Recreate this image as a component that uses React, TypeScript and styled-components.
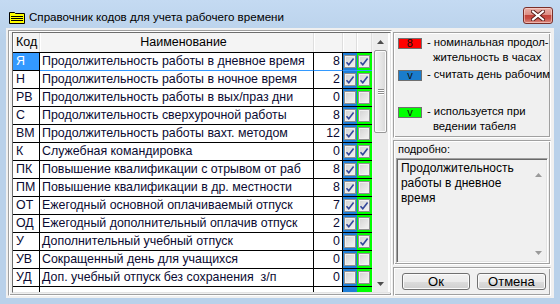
import React from "react";
import styled, { createGlobalStyle } from "styled-components";

const GlobalStyle = createGlobalStyle`
  html, body { margin: 0; padding: 0; }
  body { background: #b9d1ea; font-family: "Liberation Sans", Arial, sans-serif; }
  * { box-sizing: border-box; }
`;

type Row = { code: string; name: string; hours: number; work: boolean; used: boolean };

const rows: Row[] = [
  { code: "Я", name: "Продолжительность работы в дневное время", hours: 8, work: true, used: true },
  { code: "Н", name: "Продолжительность работы в ночное время", hours: 2, work: true, used: true },
  { code: "РВ", name: "Продолжительность работы в вых/праз дни", hours: 0, work: false, used: false },
  { code: "С", name: "Продолжительность сверхурочной работы", hours: 8, work: true, used: false },
  { code: "ВМ", name: "Продолжительность работы вахт. методом", hours: 12, work: true, used: false },
  { code: "К", name: "Служебная командировка", hours: 0, work: true, used: true },
  { code: "ПК", name: "Повышение квалификации с отрывом от раб", hours: 8, work: true, used: false },
  { code: "ПМ", name: "Повышение квалификации в др. местности", hours: 8, work: true, used: false },
  { code: "ОТ", name: "Ежегодный основной оплачиваемый отпуск", hours: 7, work: true, used: true },
  { code: "ОД", name: "Ежегодный дополнительный оплачив отпуск", hours: 2, work: true, used: false },
  { code: "У", name: "Дополнительный учебный отпуск", hours: 0, work: false, used: true },
  { code: "УВ", name: "Сокращенный день для учащихся", hours: 0, work: false, used: false },
  { code: "УД", name: "Доп. учебный отпуск без сохранения\u00a0 з/п", hours: 0, work: false, used: false },
];

const COLS = "27px 274px 29px 14px 15px";

const Window = styled.div`
  width: 560px;
  height: 304px;
  background: linear-gradient(#c4daf2, #b9d1ea 40px, #b9d1ea);
  display: flex;
  flex-direction: column;
  overflow: hidden;
`;

const TitleBar = styled.div`
  height: 28px;
  flex-shrink: 0;
  display: flex;
  align-items: flex-start;
  padding: 0 7px 0 9px;
`;

const AppIcon = styled.svg`
  margin-top: 12px;
  flex-shrink: 0;
`;

const Title = styled.div`
  margin-left: 4px;
  margin-top: 9px;
  font-family: "Liberation Sans", Arial, sans-serif;
  font-size: 11.6px;
  line-height: 16px;
  color: #000;
  flex: 1;
  white-space: nowrap;
`;

const CloseBtn = styled.div`
  margin-top: 7px;
  width: 30px;
  height: 17px;
  border: 1px solid #7a2f29;
  border-radius: 3px;
  background: linear-gradient(#eab1a9 0%, #dc8d83 45%, #c4443a 50%, #c94f45 70%, #d98c82 100%);
  box-shadow: inset 0 0 0 1px rgba(255, 220, 215, 0.55);
  display: flex;
  align-items: center;
  justify-content: center;
`;

const Client = styled.div`
  flex: 1;
  margin: 0 6px 6px 6px;
  background: #f0f0f0;
  display: flex;
  gap: 1px;
  padding: 2px 3px 2px 2px;
  min-height: 0;
`;

const Panel = styled.div`
  border: 1px solid;
  border-color: #a0a0a0 #ffffff #ffffff #a0a0a0;
  box-shadow: inset 1px 1px #ffffff, inset -1px -1px #a0a0a0;
`;

const LeftPanel = styled(Panel)`
  width: 384px;
  display: flex;
  padding: 1px 0 2px 3px;
`;

const GridBox = styled.div`
  flex: 1;
  display: flex;
  border: 1px solid;
  border-color: #6d6d6d #e3e3e3 #e3e3e3 #6d6d6d;
  background: #fff;
  min-height: 0;
`;

const Table = styled.div`
  width: 359px;
  display: flex;
  flex-direction: column;
  overflow: hidden;
`;

const HeaderRow = styled.div`
  display: grid;
  grid-template-columns: ${COLS};
  height: 20px;
  flex-shrink: 0;
  background: #f4f4f4;
  border-bottom: 1px solid #000;
`;

const HeadCell = styled.div<{ $center?: boolean }>`
  border-right: 1px solid #dedede;
  box-shadow: inset 1px 0 #ffffff;
  font-size: 12.5px;
  line-height: 19px;
  color: #000;
  padding-left: ${(p) => (p.$center ? "14px" : "3px")};
  text-align: ${(p) => (p.$center ? "center" : "left")};
  white-space: nowrap;
`;

const DataRow = styled.div`
  display: grid;
  grid-template-columns: ${COLS};
  height: 18px;
  flex-shrink: 0;
`;

const Cell = styled.div<{ $selected?: boolean; $focusLine?: boolean; $right?: boolean }>`
  border-right: 1px solid #000;
  border-bottom: 1px solid ${(p) => (p.$focusLine ? "#3399ff" : "#000")};
  background: ${(p) => (p.$selected ? "#3399ff" : "transparent")};
  color: ${(p) => (p.$selected ? "#ffffff" : "#0a0a32")};
  font-size: 12.4px;
  line-height: 17px;
  padding: ${(p) => (p.$right ? "0 2px 0 0" : "0 0 0 2px")};
  text-align: ${(p) => (p.$right ? "right" : "left")};
  white-space: nowrap;
  overflow: hidden;
`;

const CodeCell = styled(Cell)`
  padding-left: 3px;
`;

const FlagCell = styled.div<{ $color: string; $focusLine?: boolean }>`
  background: ${(p) => p.$color};
  border-bottom: 1px solid ${(p) => (p.$focusLine ? "#3399ff" : "#000")};
  display: flex;
  align-items: center;
  padding-left: 1px;
`;

const CheckBox = styled.div`
  width: 12px;
  height: 13px;
  border: 1px solid #8e8f8f;
  background: linear-gradient(135deg, #d2d2d2, #f4f4f4);
  box-shadow: inset 0 0 0 1px #f0f0f0;
  display: flex;
  align-items: center;
  justify-content: center;
`;

const VScroll = styled.div`
  width: 16px;
  display: flex;
  flex-direction: column;
  background: #ececec;
  border-left: 1px solid #f2f2f2;
`;

const ScrollBtn = styled.div`
  height: 17px;
  flex-shrink: 0;
  display: flex;
  align-items: center;
  justify-content: center;
`;

const Thumb = styled.div`
  margin: 0 1px;
  height: 83px;
  flex-shrink: 0;
  border: 1px solid #979797;
  border-radius: 2px;
  background: linear-gradient(90deg, #f4f4f4, #e4e4e4 60%, #d8d8d8);
  box-shadow: inset 0 0 0 1px #fbfbfb;
  display: flex;
  flex-direction: column;
  align-items: center;
  justify-content: center;
  gap: 1px;
`;

const Grip = styled.div`
  width: 6px;
  height: 1px;
  background: #8a8a8a;
  box-shadow: 0 1px #ffffff;
`;

const Track = styled.div`
  flex: 1;
`;

const RightCol = styled.div`
  flex: 1;
  display: flex;
  flex-direction: column;
  gap: 2px;
  padding-top: 2px;
`;

const Legend = styled(Panel)`
  height: 106px;
  flex-shrink: 0;
  padding: 2px 0 0 4px;
`;

const LegendItem = styled.div<{ $gap: number }>`
  display: flex;
  align-items: flex-start;
  margin-top: ${(p) => p.$gap}px;
`;

const Swatch = styled.div<{ $color: string }>`
  width: 24px;
  height: 11px;
  margin-top: 3px;
  flex-shrink: 0;
  background: ${(p) => p.$color};
  border: 1px solid #6f6f6f;
  font-size: 11px;
  line-height: 9px;
  text-align: center;
  color: #101010;
`;

const LegendText = styled.div`
  margin-left: 5px;
  padding-left: 6px;
  text-indent: -6px;
  font-size: 11.3px;
  line-height: 15px;
  color: #000;
  white-space: nowrap;
`;

const Detail = styled(Panel)`
  flex: 1;
  display: flex;
  flex-direction: column;
  padding: 2px 2px 1px 2px;
`;

const DetailLabel = styled.div`
  font-size: 11px;
  line-height: 13px;
  margin-left: 2px;
  margin-bottom: 2px;
  color: #000;
`;

const Memo = styled.div`
  flex: 1;
  display: flex;
  border: 1px solid;
  border-color: #a0a0a0 #ffffff #ffffff #a0a0a0;
  box-shadow: inset 1px 1px #696969, inset -1px -1px #e3e3e3;
  padding: 1px;
`;

const MemoText = styled.div`
  flex: 1;
  padding: 1px 0 0 3px;
  font-size: 12px;
  line-height: 15px;
  color: #000;
`;

const MemoScroll = styled.div`
  width: 16px;
  display: flex;
  flex-direction: column;
  justify-content: space-between;
  padding: 13px 0 6px;
  align-items: center;
`;

const ButtonBar = styled(Panel)`
  height: 29px;
  flex-shrink: 0;
  display: flex;
  gap: 7px;
  padding: 5px 0 0 8px;
`;

const Button = styled.button<{ $w: number }>`
  width: ${(p) => p.$w}px;
  height: 17px;
  border: 1px solid #707070;
  border-radius: 3px;
  background: linear-gradient(#f2f2f2 0%, #ebebeb 50%, #dddddd 51%, #cfcfcf 100%);
  box-shadow: inset 0 0 0 1px #fbfbfb;
  font-family: "Liberation Sans", Arial, sans-serif;
  font-size: 13px;
  line-height: 14px;
  color: #000;
  padding: 0;
`;

const Tick: React.FC = () => (
  <svg width="10" height="10" viewBox="0 0 10 10">
    <path d="M1.5 5.2 L3.8 7.8 L8.6 1.6" fill="none" stroke="#33479b" strokeWidth="1.6" />
  </svg>
);

const Arrow: React.FC<{ up?: boolean; color?: string }> = ({ up, color = "#4d4d4d" }) => (
  <svg width="7" height="4" viewBox="0 0 7 4">
    <path d={up ? "M0 4 L3.5 0 L7 4 Z" : "M0 0 L3.5 4 L7 0 Z"} fill={color} />
  </svg>
);

const Check: React.FC<{ on: boolean }> = ({ on }) => <CheckBox>{on && <Tick />}</CheckBox>;

export default function App() {
  return (
    <>
      <GlobalStyle />
      <Window>
        <TitleBar>
          <AppIcon width="16" height="12" viewBox="0 0 16 12">
            <path d="M0.5 0.5 H5.5 L6.5 1.5 H15.5 V11.5 H0.5 Z" fill="#ffff00" stroke="#000" />
            <path d="M2 4.5 H14 M2 6.5 H14 M2 8.5 H14" stroke="#000" strokeWidth="1" />
          </AppIcon>
          <Title>Справочник кодов для учета рабочего времени</Title>
          <CloseBtn>
            <svg width="14" height="11" viewBox="0 0 14 11">
              <path d="M2 1.5 L12 9.5 M12 1.5 L2 9.5" stroke="#5a1e1a" strokeWidth="4" strokeLinecap="square" />
              <path d="M2 1.5 L12 9.5 M12 1.5 L2 9.5" stroke="#ffffff" strokeWidth="2" strokeLinecap="square" />
            </svg>
          </CloseBtn>
        </TitleBar>
        <Client>
          <LeftPanel>
            <GridBox>
              <Table>
                <HeaderRow>
                  <HeadCell>Код</HeadCell>
                  <HeadCell $center>Наименование</HeadCell>
                  <HeadCell />
                  <HeadCell />
                  <HeadCell />
                </HeaderRow>
                {rows.map((r, i) => (
                  <DataRow key={r.code}>
                    <CodeCell $selected={i === 0}>{r.code}</CodeCell>
                    <Cell $focusLine={i === 0}>{r.name}</Cell>
                    <Cell $right $focusLine={i === 0}>{r.hours}</Cell>
                    <FlagCell $color="#1f7ed6" $focusLine={i === 0}>
                      <Check on={r.work} />
                    </FlagCell>
                    <FlagCell $color="#00ff00" $focusLine={i === 0}>
                      <Check on={r.used} />
                    </FlagCell>
                  </DataRow>
                ))}
                <DataRow>
                  <CodeCell />
                  <Cell />
                  <Cell />
                  <FlagCell $color="#1f7ed6" />
                  <FlagCell $color="#00ff00" />
                </DataRow>
              </Table>
              <VScroll>
                <ScrollBtn>
                  <Arrow up />
                </ScrollBtn>
                <Thumb>
                  <Grip />
                  <Grip />
                  <Grip />
                </Thumb>
                <Track />
                <ScrollBtn>
                  <Arrow />
                </ScrollBtn>
              </VScroll>
            </GridBox>
          </LeftPanel>
          <RightCol>
            <Legend>
              <LegendItem $gap={0}>
                <Swatch $color="#ff0000">8</Swatch>
                <LegendText>
                  - номинальная продол-
                  <br />
                  жительность в часах
                </LegendText>
              </LegendItem>
              <LegendItem $gap={2}>
                <Swatch $color="#1a7ccc">v</Swatch>
                <LegendText>- считать день рабочим</LegendText>
              </LegendItem>
              <LegendItem $gap={22}>
                <Swatch $color="#00ff00">v</Swatch>
                <LegendText>
                  - используется при
                  <br />
                  ведении табеля
                </LegendText>
              </LegendItem>
            </Legend>
            <Detail>
              <DetailLabel>подробно:</DetailLabel>
              <Memo>
                <MemoText>Продолжительность работы в дневное время</MemoText>
                <MemoScroll>
                  <Arrow up color="#9a9a9a" />
                  <Arrow color="#9a9a9a" />
                </MemoScroll>
              </Memo>
            </Detail>
            <ButtonBar>
              <Button $w={68}>Ок</Button>
              <Button $w={69}>Отмена</Button>
            </ButtonBar>
          </RightCol>
        </Client>
      </Window>
    </>
  );
}
